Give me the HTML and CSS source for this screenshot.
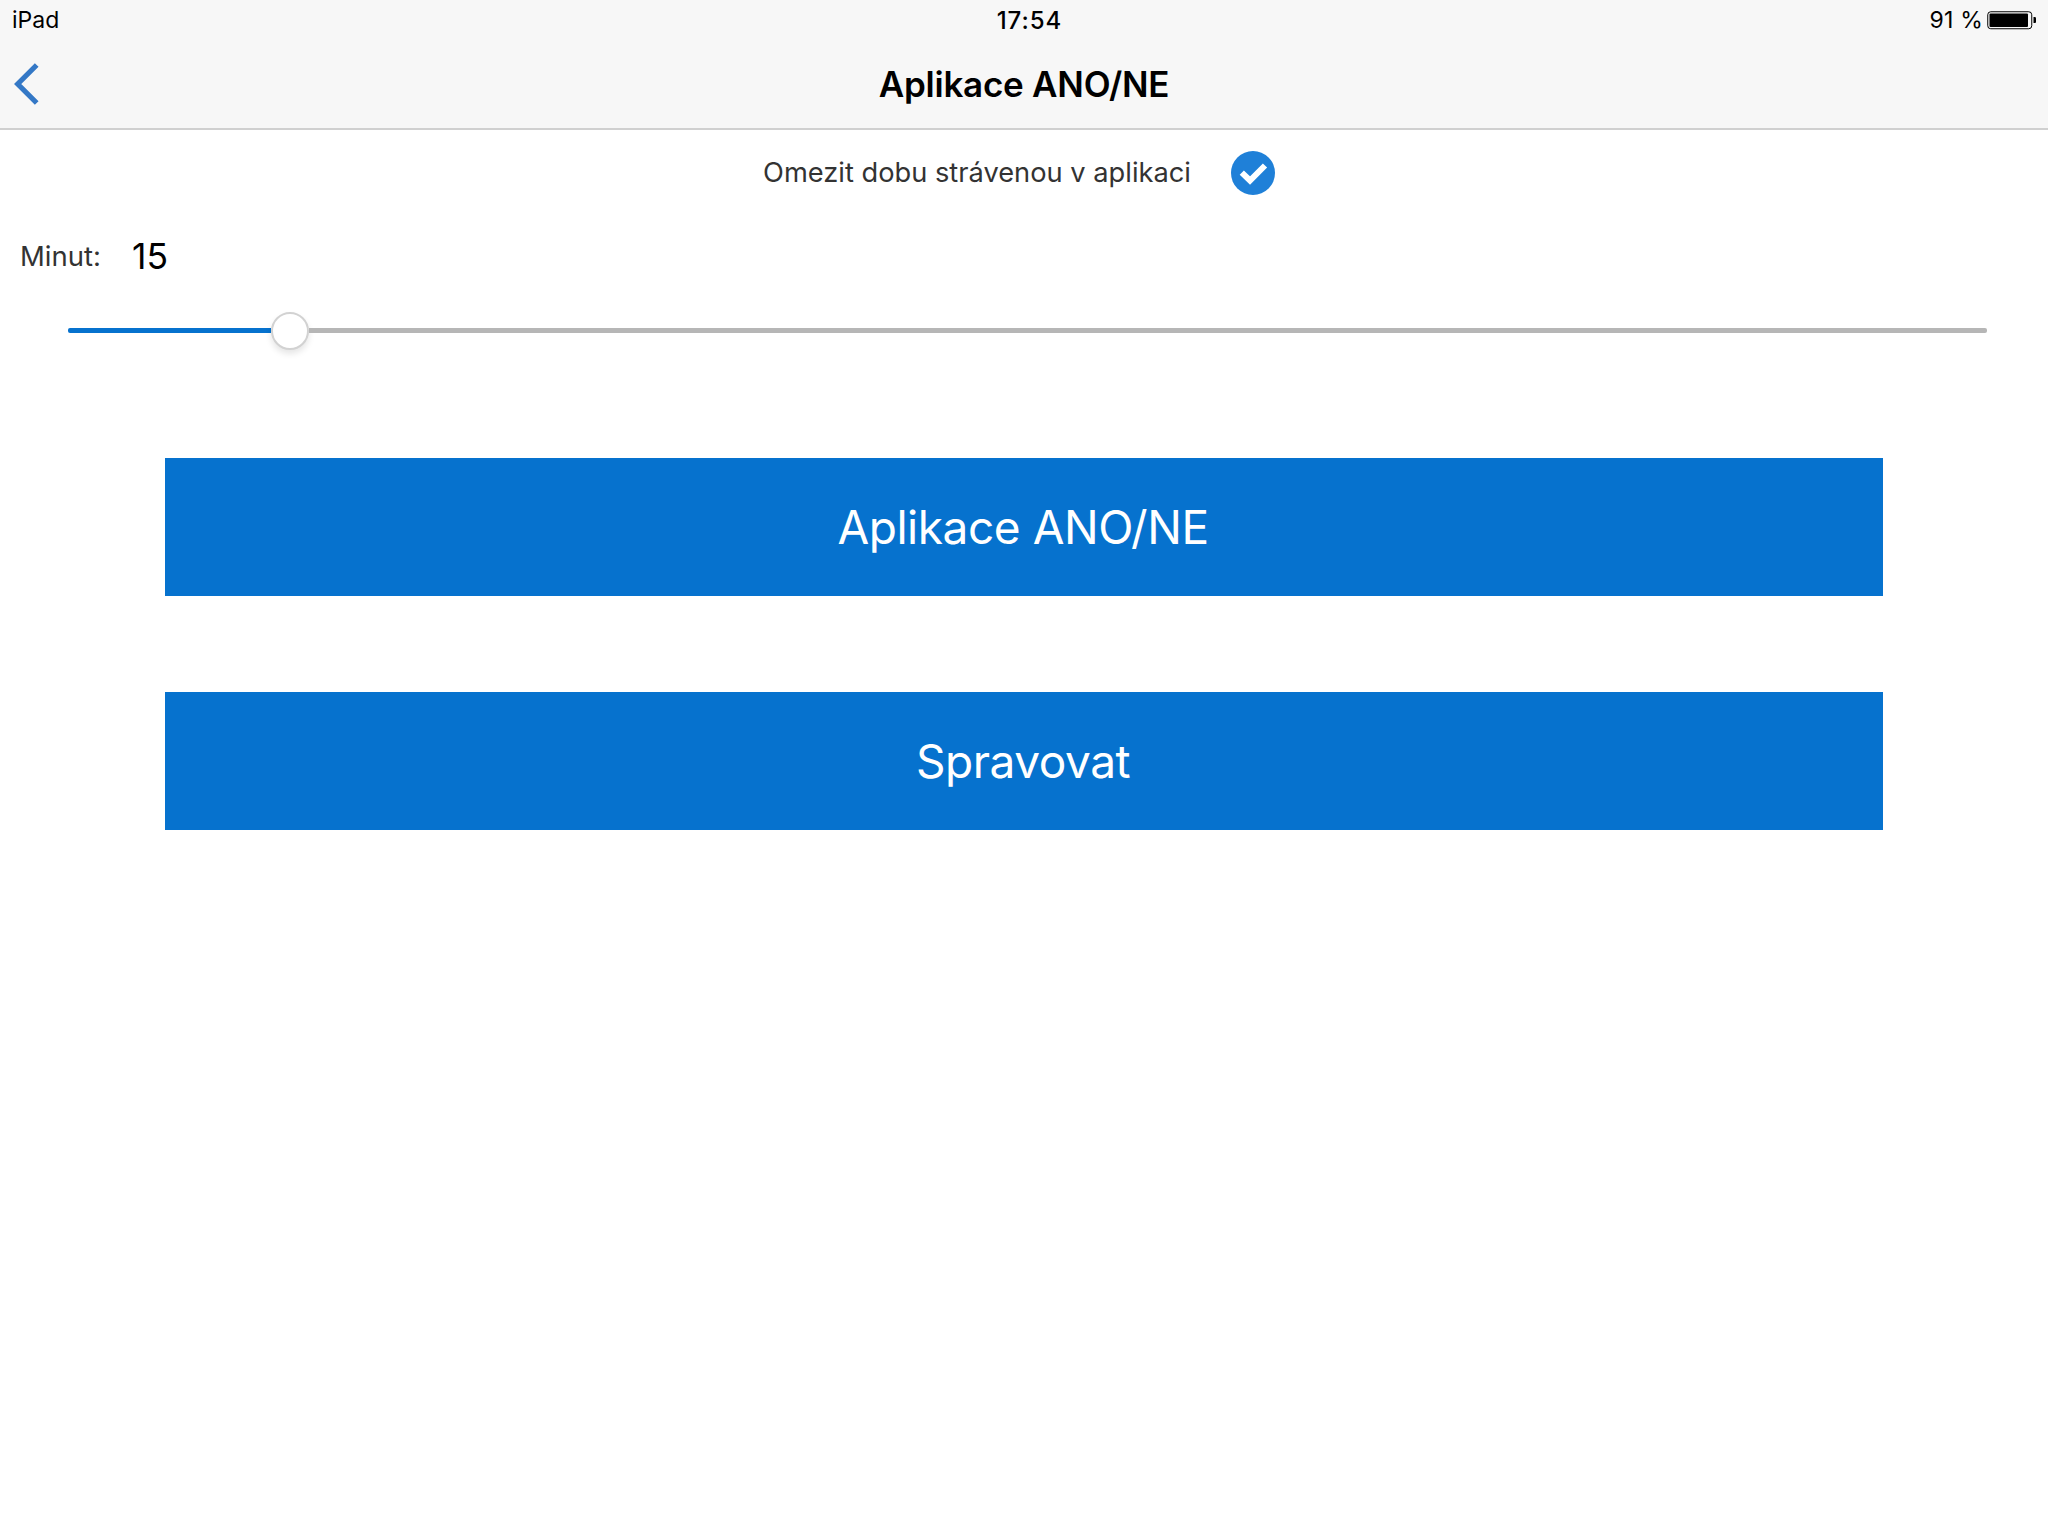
FILE: index.html
```html
<!DOCTYPE html>
<html lang="cs">
<head>
<meta charset="utf-8">
<title>Aplikace ANO/NE</title>
<link rel="stylesheet" href="styles.css">
</head>
<body>
<header class="bar">
  <div class="status">
    <span class="status-side">iPad</span>
    <span class="status-time">17:54</span>
    <span class="status-side status-right">
      <span>91 %</span>
      <svg class="battery" width="50" height="20" viewBox="0 0 50 20" aria-hidden="true">
        <rect x="0.75" y="1.75" width="44" height="17" rx="3" fill="none" stroke="#000" stroke-width="1"/>
        <rect x="2.5" y="3.5" width="38.5" height="13.5" rx="1" fill="#000"/>
        <path d="M46.5 7h1.2c.8 0 1.3.6 1.3 1.3v3.4c0 .7-.5 1.3-1.3 1.3h-1.2z" fill="#000"/>
      </svg>
    </span>
  </div>
  <div class="nav">
    <svg class="back" width="28" height="44" viewBox="0 0 28 44" aria-hidden="true">
      <path d="M23.700 3 4.700 22l19 19" fill="none" stroke="#3478c6" stroke-width="5.200"/>
    </svg>
    <h1 class="nav-title">Aplikace ANO/NE</h1>
  </div>
</header>
<main class="content">
  <div class="limit">
    <span class="limit-label">Omezit dobu strávenou v aplikaci</span>
    <svg class="check" width="44" height="44" viewBox="0 0 44 44" aria-hidden="true">
      <circle cx="22" cy="22" r="22" fill="#1f80d8"/>
      <path d="M10.800 21.600 19 29.500 34 14.500" fill="none" stroke="#fff" stroke-width="6"/>
    </svg>
  </div>
  <div class="minutes">
    <span class="minutes-label">Minut:</span>
    <span class="minutes-value">15</span>
  </div>
  <div class="slider">
    <div class="track-on"></div>
    <div class="thumb"></div>
    <div class="track-off"></div>
  </div>
  <div class="actions">
    <button class="action">Aplikace ANO/NE</button>
    <button class="action">Spravovat</button>
  </div>
</main>
</body>
</html>
```
FILE: styles.css
```css
* { box-sizing: border-box; }
html, body { margin: 0; padding: 0; }
body {
  width: 2048px;
  height: 1536px;
  background: #fff;
  font-family: Inter, "Liberation Sans", sans-serif;
  overflow: hidden;
}
.bar {
  height: 130px;
  background: #f7f7f7;
  border-bottom: 2px solid #d0d0d0;
}
.status {
  height: 40px;
  padding: 0 11px 0 12px;
  display: grid;
  grid-template-columns: 1fr auto 1fr;
  align-items: center;
  font-size: 23px;
  color: #000;
}
.status-time {
  font-size: 24px;
  font-weight: 500;
  letter-spacing: 1px;
  margin-left: 10px;
}
.status-right {
  justify-self: end;
  display: flex;
  align-items: center;
  gap: 4px;
  letter-spacing: 0.2px;
}
.nav {
  height: 88px;
  display: flex;
  align-items: center;
  justify-content: center;
  position: relative;
}
.back { position: absolute; left: 13px; top: 22px; }
.nav-title {
  margin: 0;
  font-size: 35px;
  font-weight: 600;
  color: #000;
  letter-spacing: -0.25px;
}
.limit {
  height: 86px;
  display: flex;
  align-items: center;
  justify-content: center;
  padding-right: 10px;
  gap: 40px;
}
.limit-label { font-size: 27.250px; color: #333; margin-bottom: 2px; }
.minutes {
  height: 79px;
  padding-left: 20px;
  display: flex;
  align-items: center;
  gap: 31px;
}
.minutes-label { font-size: 27.500px; color: #333; }
.minutes-value { font-size: 35.500px; color: #000; margin-top: 2px; }
.slider {
  height: 38px;
  margin: 17px 61px 0 68px;
  display: flex;
  align-items: center;
}
.track-on {
  width: 203px;
  height: 5px;
  margin-bottom: 1px;
  background: #0672ce;
  border-radius: 2px 0 0 2px;
}
.thumb {
  width: 38px;
  height: 38px;
  flex: none;
  background: #fff;
  border: 2px solid #d2d2d2;
  border-radius: 50%;
  box-shadow: 0 4px 6px rgba(0,0,0,0.1);
}
.track-off {
  flex: 1;
  height: 5px;
  margin-bottom: 1px;
  background: #b6b6b6;
  border-radius: 0 2px 2px 0;
}
.actions {
  margin: 108px 165px 0;
  display: flex;
  flex-direction: column;
  gap: 96px;
}
.action {
  height: 138px;
  border: 0;
  padding: 0 2px 0 0;
  background: #0672ce;
  color: #fff;
  font-family: inherit;
  font-size: 46px;
  letter-spacing: -0.45px;
}
```
